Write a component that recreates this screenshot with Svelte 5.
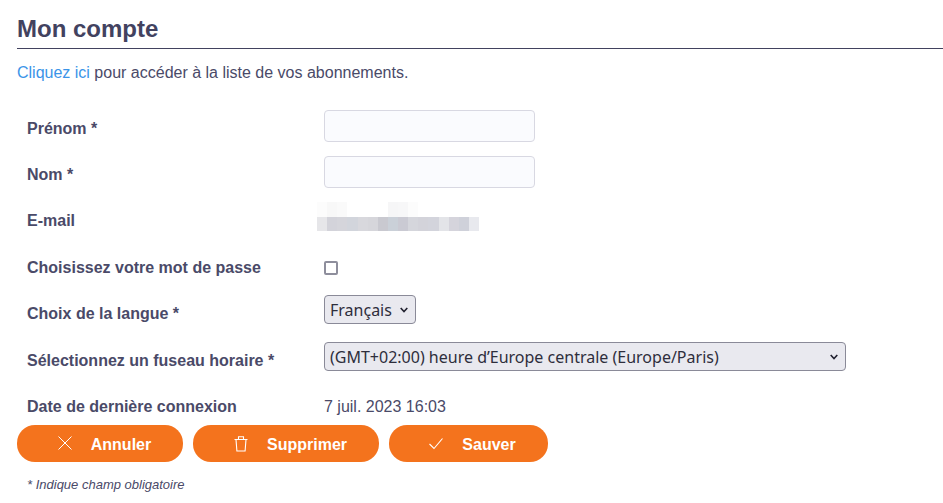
<script>
  const top = ['#fcfcfc', '#f8f8f8', '#fafafa', null, null, null, null, '#f6f6f7', '#f7f7f8', '#fcfcfc', null, null, null, null, null, null]
  const bottom = ['#e6e6e9', '#d3d3da', '#d5d5db', '#d2d5dc', '#d8d8dd', '#d6d6db', '#c9c9d0', '#cad0d8', '#cacad3', '#d5d6dc', '#d3d3da', '#d3d4dc', '#e3e4e8', '#d5d4dc', '#cfd1da', '#e8e9ee']
</script>

<main class="page">
  <h1>Mon compte</h1>
  <p class="intro"><a href="#abos">Cliquez ici</a> pour accéder à la liste de vos abonnements.</p>

  <form class="fields">
    <div class="row r-input">
      <label for="prenom">Prénom *</label>
      <input id="prenom" type="text" />
    </div>
    <div class="row r-input">
      <label for="nom">Nom *</label>
      <input id="nom" type="text" />
    </div>
    <div class="row r-mail">
      <label for="mail">E-mail</label>
      <div id="mail" class="mosaic">
        {#each top as c}
          <span style="background:{c ?? 'transparent'}"></span>
        {/each}
        {#each bottom as c}
          <span style="background:{c}"></span>
        {/each}
      </div>
    </div>
    <div class="row r-check">
      <label for="pass">Choisissez votre mot de passe</label>
      <input id="pass" type="checkbox" />
    </div>
    <div class="row r-lang">
      <label for="langue">Choix de la langue *</label>
      <select id="langue" class="narrow"><option>Français</option></select>
    </div>
    <div class="row r-tz">
      <label for="tz">Sélectionnez un fuseau horaire *</label>
      <select id="tz" class="wide"><option>(GMT+02:00) heure d’Europe centrale (Europe/Paris)</option></select>
    </div>
    <div class="row r-date">
      <span class="lbl">Date de dernière connexion</span>
      <span class="val">7 juil. 2023 16:03</span>
    </div>

    <div class="actions">
      <button type="button" class="b-cancel">
        <svg viewBox="0 0 14 16" width="14" height="16" fill="none" stroke="currentColor" stroke-width="1">
          <path d="M.5.5 13.5 13.5M13.5.5.5 13.5" />
        </svg>
        Annuler
      </button>
      <button type="button" class="b-del">
        <svg viewBox="0 0 14 16" width="14" height="16" fill="none" stroke="currentColor" stroke-width="1.1">
          <path d="M.5 3.5h13M4.5 3.5V.7h5v2.8M2 3.5l.9 11.5h8.2l.9-11.5" />
        </svg>
        Supprimer
      </button>
      <button type="button" class="b-save">
        <svg viewBox="0 0 14 16" width="14" height="16" fill="none" stroke="currentColor" stroke-width="1.1">
          <path d="M.5 8 5 12.5 13.5 2.5" />
        </svg>
        Sauver
      </button>
    </div>
    <p class="note">* Indique champ obligatoire</p>
  </form>
</main>

<style>
  :global(body) {
    margin: 0;
    background: #fff;
  }

  .page {
    padding: 0 0 0 17px;
    font-family: "Liberation Sans", Arial, sans-serif;
    font-size: 16px;
    line-height: 24px;
    color: #4a4a68;
  }

  h1 {
    margin: 0;
    padding: 14px 0 4px;
    height: 30px;
    line-height: 30px;
    font-size: 24px;
    font-weight: 700;
    color: #42425f;
    border-bottom: 1px solid #42425f;
  }

  .intro {
    margin: 0;
    padding-top: 12px;
    height: 42px;
  }

  a {
    color: #3b94e8;
    text-decoration: none;
  }

  .row {
    display: grid;
    grid-template-columns: 297px 1fr;
    align-items: center;
    padding-left: 10px;
  }

  label, .lbl, .val {
    padding-top: 6px;
  }

  label, .lbl {
    font-weight: 700;
  }

  input[type="text"] {
    box-sizing: border-box;
    width: 211px;
    height: 32px;
    margin: 0;
    background: #fafbfe;
    border: 1px solid #d8d8e2;
    border-radius: 4px;
  }

  .r-input {
    height: 46px;
  }

  .mosaic {
    display: grid;
    grid-template-columns: repeat(16, 10.125px);
    grid-template-rows: 15px 14px;
    margin: -3px 0 0 -7px;
    width: 162px;
  }

  .r-mail {
    height: 46px;
  }

  .r-check {
    height: 47px;
  }

  input[type="checkbox"] {
    box-sizing: border-box;
    width: 14px;
    height: 14px;
    margin: 7px 0 0;
    appearance: none;
    background: #fff;
    border: 2px solid #8e8e9c;
    border-radius: 2px;
  }

  select {
    box-sizing: border-box;
    justify-self: start;
    height: 29px;
    padding: 0 5px;
    appearance: none;
    font-family: "Noto Sans", sans-serif;
    font-size: 16px;
    color: #2e2e3c;
    background-color: #e9e9ef;
    background-image: url("data:image/svg+xml,%3Csvg xmlns='http://www.w3.org/2000/svg' width='8' height='6'%3E%3Cpath d='M.7 1 4 4.6 7.3 1' fill='none' stroke='%23222230' stroke-width='1.6'/%3E%3C/svg%3E");
    background-repeat: no-repeat;
    background-position: right 7px center;
    border: 1px solid #8a8a98;
    border-radius: 4px;
  }

  .narrow {
    width: 92px;
    margin: -3px 0 0;
  }

  .wide {
    width: 522px;
    margin: -2px 0 0;
  }

  .r-lang {
    height: 46px;
  }

  .r-tz {
    height: 47px;
  }

  .r-date {
    height: 46px;
  }

  .actions {
    display: flex;
    gap: 10px;
    margin-top: -2px;
  }

  button {
    display: flex;
    align-items: center;
    justify-content: center;
    box-sizing: border-box;
    height: 37px;
    border: 0;
    border-radius: 18px;
    background: #f4731d;
    color: #fff;
    font-family: "Liberation Sans", Arial, sans-serif;
    font-size: 16px;
    font-weight: 700;
    gap: 19px;
    padding: 2px 0 0 9px;
  }

  button svg {
    margin-top: -1px;
  }

  .b-cancel {
    width: 166px;
  }

  .b-del {
    width: 186px;
  }

  .b-save {
    width: 159px;
    padding-left: 8px;
  }

  .note {
    margin: 0;
    padding: 14px 0 0 10px;
    font-size: 13px;
    line-height: 18px;
    font-style: italic;
  }
</style>
